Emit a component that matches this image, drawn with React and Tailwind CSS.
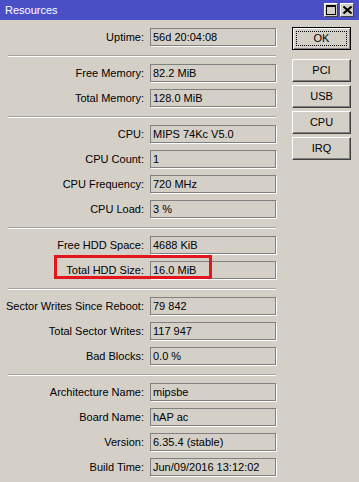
import React from 'react';

const groups = [
  [['Uptime', '56d 20:04:08']],
  [['Free Memory', '82.2 MiB'], ['Total Memory', '128.0 MiB']],
  [['CPU', 'MIPS 74Kc V5.0'], ['CPU Count', '1'], ['CPU Frequency', '720 MHz'], ['CPU Load', '3 %']],
  [['Free HDD Space', '4688 KiB'], ['Total HDD Size', '16.0 MiB']],
  [['Sector Writes Since Reboot', '79 842'], ['Total Sector Writes', '117 947'], ['Bad Blocks', '0.0 %']],
  [['Architecture Name', 'mipsbe'], ['Board Name', 'hAP ac'], ['Version', '6.35.4 (stable)'], ['Build Time', 'Jun/09/2016 13:12:02']],
];

const Row = ({ label, value }) => (
  <div className="flex items-center h-[18px]">
    <div className="w-[150px] pr-[6px] text-right leading-none">{label}:</div>
    <div className="w-[126px] h-[18px] border border-[#808080] shadow-[1px_1px_0_#fff] pl-[2px] flex items-center leading-none">
      {value}
    </div>
  </div>
);

const Button = ({ children, focused }) => (
  <div
    className={`relative w-[59px] h-[23px] flex items-center justify-center leading-none ${
      focused
        ? 'border border-black shadow-[inset_1px_1px_0_#fff,inset_-1px_-1px_0_#808080]'
        : 'border border-t-white border-l-white border-b-[#404040] border-r-[#404040] shadow-[inset_-1px_-1px_0_#808080]'
    }`}
  >
    {focused && <div className="absolute inset-[3px] border border-dotted border-black" />}
    <span className="relative">{children}</span>
  </div>
);

const TitleBtn = ({ children }) => (
  <div className="w-[14px] h-[14px] bg-[#d4d0c8] border border-t-white border-l-white border-b-[#404040] border-r-[#404040] flex items-center justify-center">
    {children}
  </div>
);

export default function App() {
  return (
    <div
      className="w-[359px] h-[482px] bg-[#d4d0c8] text-[11px] text-black overflow-hidden"
      style={{ fontFamily: '"Liberation Sans", Arial, sans-serif' }}
    >
      {/* title bar */}
      <div className="h-[20px] bg-[#4b4fc6] flex items-center justify-between pl-[5px] pr-[5px]">
        <span className="text-white text-[11px] leading-none">Resources</span>
        <div className="flex gap-[2px]">
          <TitleBtn>
            <svg width="10" height="10" viewBox="0 0 10 10">
              <rect x="0.5" y="0.5" width="9" height="9" fill="none" stroke="#000" />
              <rect x="0" y="0" width="10" height="2" fill="#000" />
            </svg>
          </TitleBtn>
          <TitleBtn>
            <svg width="9" height="8" viewBox="0 0 9 8">
              <path d="M0.5 0.5 L8.5 7.5 M8.5 0.5 L0.5 7.5" stroke="#000" strokeWidth="2" />
            </svg>
          </TitleBtn>
        </div>
      </div>

      <div className="relative flex">
        {/* fields */}
        <div className="w-[276px] pt-[8px]">
          {groups.map((g, gi) => (
            <div key={gi}>
              {gi > 0 && <div className="ml-[8px] w-[268px] h-px bg-[#a7a49d] shadow-[0_1px_0_#fff] mt-[9px] mb-[8px]" />}
              <div className="flex flex-col gap-[7px]">
                {g.map(([l, v]) => (
                  <Row key={l} label={l} value={v} />
                ))}
              </div>
            </div>
          ))}
        </div>

        {/* buttons */}
        <div className="ml-[16px] pt-[7px] flex flex-col">
          <Button focused>OK</Button>
          <div className="flex flex-col gap-[3px] mt-[9px]">
            <Button>PCI</Button>
            <Button>USB</Button>
            <Button>CPU</Button>
            <Button>IRQ</Button>
          </div>
        </div>

        {/* highlight */}
        <div className="absolute left-[54px] top-[235px] w-[158px] h-[24px] border-[3px] border-[#e3161d]" />
      </div>
    </div>
  );
}
